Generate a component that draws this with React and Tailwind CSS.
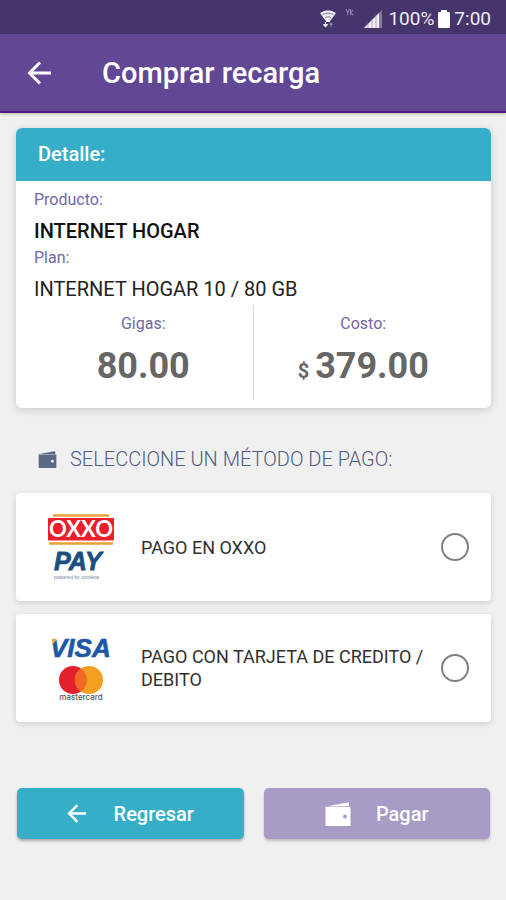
import { useState } from "react";

function ArrowLeft({ className }) {
  return (
    <svg viewBox="0 0 24 24" className={className} fill="none" stroke="currentColor" strokeWidth="3" aria-hidden="true">
      <path d="M23.500 12H2.500M12.500 1.500 2 12l10.500 10.500" />
    </svg>
  );
}

function Wallet({ className }) {
  return (
    <svg viewBox="0 0 26 24" className={className} fill="currentColor" aria-hidden="true">
      <path d="M2 4.200 22.500.5c1-.2 1.500.3 1.500 1.200V4.200L8 4.600z" />
      <path fillRule="evenodd" d="M.5 4Q1 5 2.500 5h22a1 1 0 0 1 1 1v17a1 1 0 0 1-1 1H1.500a1 1 0 0 1-1-1zM20 12.500a2 2 0 1 0 0 4 2 2 0 0 0 0-4z" />
    </svg>
  );
}

function StatusBar() {
  return (
    <div className="flex h-[34px] items-center justify-end bg-[#46346c] pr-[15px] pt-[3px] text-[19px] leading-6 text-[#f0edf5]">
      <svg viewBox="0 0 18 20" className="h-5 w-[18px]" aria-hidden="true">
        <path d="M1 4Q9-1.500 17 4L10.500 13h-3z" fill="#f0edf5" />
        <path d="M3.500 5.500q5.500-3 11 0M6 8.500q3-1.500 6 0" fill="none" stroke="#6d5c91" strokeWidth=".8" />
        <path d="M6.500 13v3M4.500 15.500l2 2.500 2-2.500z" fill="#fff" stroke="#fff" strokeWidth="1" />
        <path d="M12 18v-4M10.500 15.500 12 14l1.500 1.500" fill="none" stroke="#8f82ab" strokeWidth="1.200" />
      </svg>
      <svg viewBox="0 0 10 10" className="mb-3 ml-2 h-[9px] w-[9px]" fill="none" stroke="#8f82ab" strokeWidth="1.200" aria-hidden="true">
        <path d="M1 1l2 4 2-4M3 5v3M6 1v7M9 2 6 5l3 3" />
      </svg>
      <svg viewBox="0 0 18 18" className="ml-[10px] h-[18px] w-[18px]" aria-hidden="true">
        <path d="M18 0v18H0z" fill="#85779f" />
        <path d="M15 3v15H0z" fill="#f4f1f7" />
        <path d="M4 13v5M8 9v9M12 5v13" stroke="#8b7ea5" strokeWidth=".7" />
      </svg>
      <span className="ml-[6px]">100%</span>
      <svg viewBox="0 0 12 18" className="mx-[4px] h-[18px] w-3" fill="#ffffff" aria-hidden="true">
        <path d="M3 0h6v2h2a1 1 0 0 1 1 1v14a1 1 0 0 1-1 1H1a1 1 0 0 1-1-1V3a1 1 0 0 1 1-1h2z" />
      </svg>
      <span>7:00</span>
    </div>
  );
}

function OxxoLogo() {
  return (
    <svg viewBox="0 0 66 68" className="h-[68px] w-[66px]" role="img" aria-label="OXXO PAY">
      <path d="M5 2.500h56" stroke="#e8a033" strokeWidth="2.500" />
      <rect x="0" y="5" width="66" height="22.500" rx="1" fill="#e9202a" />
      <path d="M1 30.500h64" stroke="#e8a033" strokeWidth="2.500" />
      <text x="33" y="24" textAnchor="middle" fontFamily="Lato, sans-serif" fontWeight="700" fontSize="22" fill="#ffffff">OXXO</text>
      <text x="6" y="57" fontFamily="Liberation Sans, sans-serif" fontWeight="700" fontStyle="italic" fontSize="25" fill="#1c4f80" stroke="#1c4f80" strokeWidth=".8">PAY</text>
      <text x="6" y="66" fontFamily="Liberation Sans, sans-serif" fontSize="5" fill="#6d87a3">powered by conekta</text>
    </svg>
  );
}

function CardLogo() {
  return (
    <svg viewBox="0 0 66 68" className="h-[68px] w-[66px]" role="img" aria-label="VISA mastercard">
      <defs>
        <linearGradient id="visa" gradientUnits="userSpaceOnUse" x1="2" y1="2" x2="12" y2="12">
          <stop offset="0.500" stopColor="#eda63a" />
          <stop offset="0.560" stopColor="#1d57a5" />
        </linearGradient>
      </defs>
      <text x="2" y="23" fontFamily="Liberation Sans, sans-serif" fontWeight="700" fontStyle="italic" fontSize="26" fill="url(#visa)" stroke="url(#visa)" strokeWidth=".6">VISA</text>
      <circle cx="25" cy="46" r="14" fill="#e3202c" />
      <circle cx="41" cy="46" r="14" fill="#f3a022" />
      <path d="M33 34.500a14 14 0 0 1 0 23 14 14 0 0 1 0-23z" fill="#ee6a24" />
      <text x="33" y="66" textAnchor="middle" fontFamily="Inter, sans-serif" fontWeight="500" fontSize="8" fill="#555555">mastercard</text>
    </svg>
  );
}

function PaymentOption({ id, logo, label, checked, onChange }) {
  return (
    <label
      htmlFor={id}
      className="flex h-[108px] items-center rounded-[4px] bg-white pl-8 pr-[22px] shadow-[0_2px_6px_rgba(0,0,0,0.14)]"
    >
      {logo}
      <span className="ml-[27px] flex-1 text-[18px] leading-[23px] text-[#303030]">{label}</span>
      <input
        id={id}
        type="radio"
        name="metodo"
        checked={checked}
        onChange={onChange}
        className="ml-2 h-7 w-7 shrink-0 appearance-none rounded-full border-2 border-[#808080] bg-white checked:border-8 checked:border-[#36aec8]"
      />
    </label>
  );
}

export default function App() {
  const [method, setMethod] = useState(null);

  return (
    <div className="flex min-h-screen flex-col bg-[#f0f0f0] font-[Roboto,'Liberation_Sans',sans-serif]">
      <StatusBar />
      <header className="flex h-[79px] items-center border-b-2 border-[#4c1c80] bg-[#624794] pl-[27px] text-white shadow-[0_1px_3px_rgba(0,0,0,0.25)]">
        <button type="button" aria-label="Volver" className="flex">
          <ArrowLeft className="h-6 w-[25px]" />
        </button>
        <h1 className="ml-[50px] text-[29px] font-medium leading-9">Comprar recarga</h1>
      </header>

      <main className="flex flex-col pl-4 pr-[15px] pt-[15px]">
        <section className="overflow-hidden rounded-[6px] bg-white shadow-[0_2px_8px_rgba(0,0,0,0.16)]">
          <h2 className="flex h-[53px] items-center bg-[#36aec8] pb-[2px] pl-[22px] text-[20px] font-medium text-white">Detalle:</h2>
          <dl className="px-[18px] pt-2">
            <dt className="text-[16px] leading-[22px] text-[#7565a6]">Producto:</dt>
            <dd className="mb-1 mt-2 text-[20px] font-medium leading-6 text-[#111111]">INTERNET HOGAR</dd>
            <dt className="text-[16px] leading-[22px] text-[#7565a6]">Plan:</dt>
            <dd className="mt-2 text-[20px] leading-6 text-[#222222]">INTERNET HOGAR 10 / 80 GB</dd>
          </dl>
          <dl className="mb-2 mt-1 grid h-[95px] grid-cols-2 text-center">
            <div className="border-r border-[#d8d8d8] pl-[18px] pt-2">
              <dt className="text-[16px] leading-[22px] text-[#7565a6]">Gigas:</dt>
              <dd className="mt-2 text-[36px] font-bold leading-[46px] text-[#666666]">80.00</dd>
            </div>
            <div className="pr-[18px] pt-2">
              <dt className="text-[16px] leading-[22px] text-[#7565a6]">Costo:</dt>
              <dd className="mt-2 text-[36px] font-bold leading-[46px] text-[#666666]">
                <span className="mr-[6px] text-[20px]">$</span>379.00
              </dd>
            </div>
          </dl>
        </section>

        <fieldset className="mt-9">
          <legend className="flex items-center pb-[19px] pl-[22px] text-[20px] font-light leading-[30px] text-[#4f5d7e]">
            <Wallet className="mr-[13px] h-[17px] w-[19px] text-[#5a6886]" />
            SELECCIONE UN MÉTODO DE PAGO:
          </legend>
          <div className="flex flex-col gap-[13px]">
            <PaymentOption
              id="oxxo"
              logo={<OxxoLogo />}
              label="PAGO EN OXXO"
              checked={method === "oxxo"}
              onChange={() => setMethod("oxxo")}
            />
            <PaymentOption
              id="tarjeta"
              logo={<CardLogo />}
              label="PAGO CON TARJETA DE CREDITO / DEBITO"
              checked={method === "tarjeta"}
              onChange={() => setMethod("tarjeta")}
            />
          </div>
        </fieldset>

        <div className="mt-[66px] grid grid-cols-2 gap-5 px-px">
          <button
            type="button"
            className="flex h-[51px] items-center justify-center gap-[27px] rounded-[5px] bg-[#36aec8] text-[20px] font-medium text-white shadow-[0_2px_3px_rgba(0,0,0,0.3)]"
          >
            <ArrowLeft className="h-[19px] w-5" />
            Regresar
          </button>
          <button
            type="button"
            className="flex h-[51px] items-center justify-center gap-[25px] rounded-[5px] bg-[#a89bc6] text-[20px] font-medium text-white shadow-[0_2px_3px_rgba(0,0,0,0.22)]"
          >
            <Wallet className="h-6 w-[26px]" />
            Pagar
          </button>
        </div>
      </main>
    </div>
  );
}
